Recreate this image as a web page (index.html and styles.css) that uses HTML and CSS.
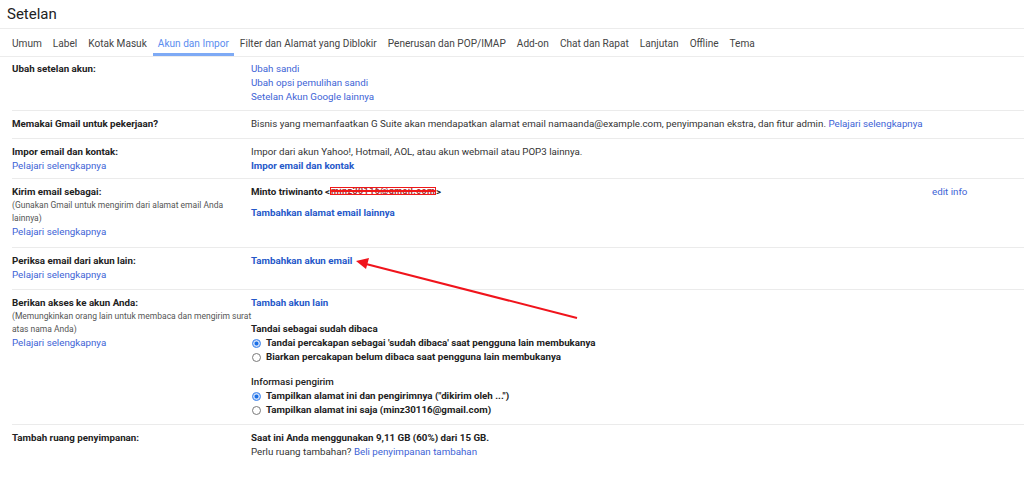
FILE: index.html
```html
<!DOCTYPE html>
<html lang="id">
<head>
<meta charset="utf-8">
<title>Setelan</title>
<link rel="stylesheet" href="styles.css">
</head>
<body>
<div class="page">
  <header class="title-bar"><h1 class="title">Setelan</h1></header>
  <nav class="tabs">
    <span class="tab">Umum</span>
    <span class="tab">Label</span>
    <span class="tab">Kotak Masuk</span>
    <span class="tab active">Akun dan Impor</span>
    <span class="tab">Filter dan Alamat yang Diblokir</span>
    <span class="tab">Penerusan dan POP/IMAP</span>
    <span class="tab">Add-on</span>
    <span class="tab">Chat dan Rapat</span>
    <span class="tab">Lanjutan</span>
    <span class="tab">Offline</span>
    <span class="tab">Tema</span>
  </nav>

  <section class="settings">
    <div class="row first">
      <div class="label"><b>Ubah setelan akun:</b></div>
      <div class="value">
        <a class="link">Ubah sandi</a>
        <a class="link">Ubah opsi pemulihan sandi</a>
        <a class="link">Setelan Akun Google lainnya</a>
      </div>
    </div>

    <div class="row">
      <div class="label"><b>Memakai Gmail untuk pekerjaan?</b></div>
      <div class="value wide">Bisnis yang memanfaatkan G Suite akan mendapatkan alamat email namaanda@example.com, penyimpanan ekstra, dan fitur admin. <a class="link inline">Pelajari selengkapnya</a></div>
    </div>

    <div class="row tight">
      <div class="label"><b>Impor email dan kontak:</b><a class="link">Pelajari selengkapnya</a></div>
      <div class="value">
        <span>Impor dari akun Yahoo!, Hotmail, AOL, atau akun webmail atau POP3 lainnya.</span>
        <a class="link strong">Impor email dan kontak</a>
      </div>
    </div>

    <div class="row loose">
      <div class="label">
        <b>Kirim email sebagai:</b>
        <span class="note">(Gunakan Gmail untuk mengirim dari alamat email Anda lainnya)</span>
        <a class="link">Pelajari selengkapnya</a>
      </div>
      <div class="value">
        <span class="bold">Minto triwinanto &lt;<span class="redact">minz30116@gmail.com</span>&gt;</span>
        <a class="link strong gap">Tambahkan alamat email lainnya</a>
      </div>
      <div class="aside"><a class="link">edit info</a></div>
    </div>

    <div class="row">
      <div class="label"><b>Periksa email dari akun lain:</b><a class="link">Pelajari selengkapnya</a></div>
      <div class="value"><a class="link strong">Tambahkan akun email</a></div>
    </div>

    <div class="row">
      <div class="label">
        <b>Berikan akses ke akun Anda:</b>
        <span class="note wrapwide">(Memungkinkan orang lain untuk membaca dan mengirim surat atas nama Anda)</span>
        <a class="link">Pelajari selengkapnya</a>
      </div>
      <div class="value">
        <a class="link strong">Tambah akun lain</a>
        <div class="group">
          <span class="group-title">Tandai sebagai sudah dibaca</span>
          <label class="radio"><span class="dot on"></span>Tandai percakapan sebagai 'sudah dibaca' saat pengguna lain membukanya</label>
          <label class="radio"><span class="dot"></span>Biarkan percakapan belum dibaca saat pengguna lain membukanya</label>
        </div>
        <div class="group second">
          <span class="group-title medium">Informasi pengirim</span>
          <label class="radio"><span class="dot on"></span>Tampilkan alamat ini dan pengirimnya ("dikirim oleh ...")</label>
          <label class="radio"><span class="dot"></span>Tampilkan alamat ini saja (minz30116@gmail.com)</label>
        </div>
      </div>
    </div>

    <div class="row last">
      <div class="label"><b>Tambah ruang penyimpanan:</b></div>
      <div class="value">
        <span class="bold">Saat ini Anda menggunakan 9,11 GB (60%) dari 15 GB.</span>
        <span>Perlu ruang tambahan? <a class="link inline">Beli penyimpanan tambahan</a></span>
      </div>
    </div>
  </section>

  <svg class="arrow" width="1024" height="479" viewBox="0 0 1024 479" aria-hidden="true">
    <line x1="577" y1="318" x2="366" y2="264" stroke="#f0141c" stroke-width="2"/>
    <polygon points="356,261 369,258 366,269" fill="#f0141c"/>
  </svg>
</div>
</body>
</html>
```

FILE: styles.css
```css
* { box-sizing: border-box; }
html, body { margin: 0; padding: 0; background: #fff; }
body {
  font-family: Roboto, "Liberation Sans", Arial, sans-serif;
  font-size: 9.75px;
  color: #222;
}
.page { position: relative; width: 1024px; height: 479px; overflow: hidden; }

.title-bar {
  height: 29px;
  border-bottom: 1px solid #ececec;
  padding-left: 7px;
}
.title {
  margin: 0;
  font-weight: 400;
  font-size: 15px;
  line-height: 28px;
  color: #222;
}

.tabs {
  display: flex;
  gap: 1px;
  padding-left: 7px;
  height: 28px;
  border-bottom: 1px solid #ececec;
}
.tab {
  padding: 4px 5px 0;
  font-size: 10.1px;
  line-height: 21px;
  color: #444;
  border-bottom: 3px solid transparent;
  white-space: nowrap;
}
.tab.active {
  color: #5b8def;
  border-bottom-color: #7eaaf5;
}

.settings { padding-left: 12px; }
.row {
  display: grid;
  grid-template-columns: 239px 1fr 92px;
  padding: 6px 0 7px;
  border-top: 1px solid #ebebeb;
  line-height: 14px;
}
.row.first { border-top: none; padding-top: 5px; padding-bottom: 6px; }
.row.tight { padding-bottom: 5px; }
.row.loose { padding-bottom: 8px; }
.row.last { padding-top: 6px; }
.label, .value { display: flex; flex-direction: column; align-items: flex-start; }
.label b { font-weight: 700; color: #222; }
.value { color: #333; }
.value.wide { display: block; grid-column: 2 / 4; }
.bold { font-weight: 700; color: #222; }

.link { color: #3d63d6; text-decoration: none; cursor: pointer; }
.link.inline { display: inline; }
.link.strong { font-weight: 700; color: #2558c9; }
.link.gap { margin-top: 7px; }

.note {
  font-size: 8.5px;
  line-height: 13px;
  color: #555;
}
.note.wrapwide { margin-right: -14px; }

.redact {
  display: inline-block;
  vertical-align: middle;
  height: 8px;
  margin-top: -3px;
  line-height: 7px;
  border: 1.5px solid #f01818;
  color: #a33;
  letter-spacing: 0.4px;
  font-size: 9px;
  text-decoration: line-through #f01818 2px;
  overflow: hidden;
}

.group { display: flex; flex-direction: column; margin-top: 12px; }
.group.second { margin-top: 11px; }
.group-title { font-weight: 700; color: #222; }
.group-title.medium { font-weight: 500; }
.radio {
  display: flex;
  align-items: center;
  gap: 5px;
  height: 14px;
  font-weight: 700;
  color: #222;
  padding-left: 1px;
}
.dot {
  width: 9px;
  height: 9px;
  border-radius: 50%;
  border: 1px solid #7a7a7a;
  background: #fff;
  flex: none;
}
.dot.on {
  border-color: #5d97f0;
  background: #1a6fe6;
  box-shadow: inset 0 0 0 1.5px #cfe0fb;
}

.arrow { position: absolute; left: 0; top: 0; pointer-events: none; }
```
